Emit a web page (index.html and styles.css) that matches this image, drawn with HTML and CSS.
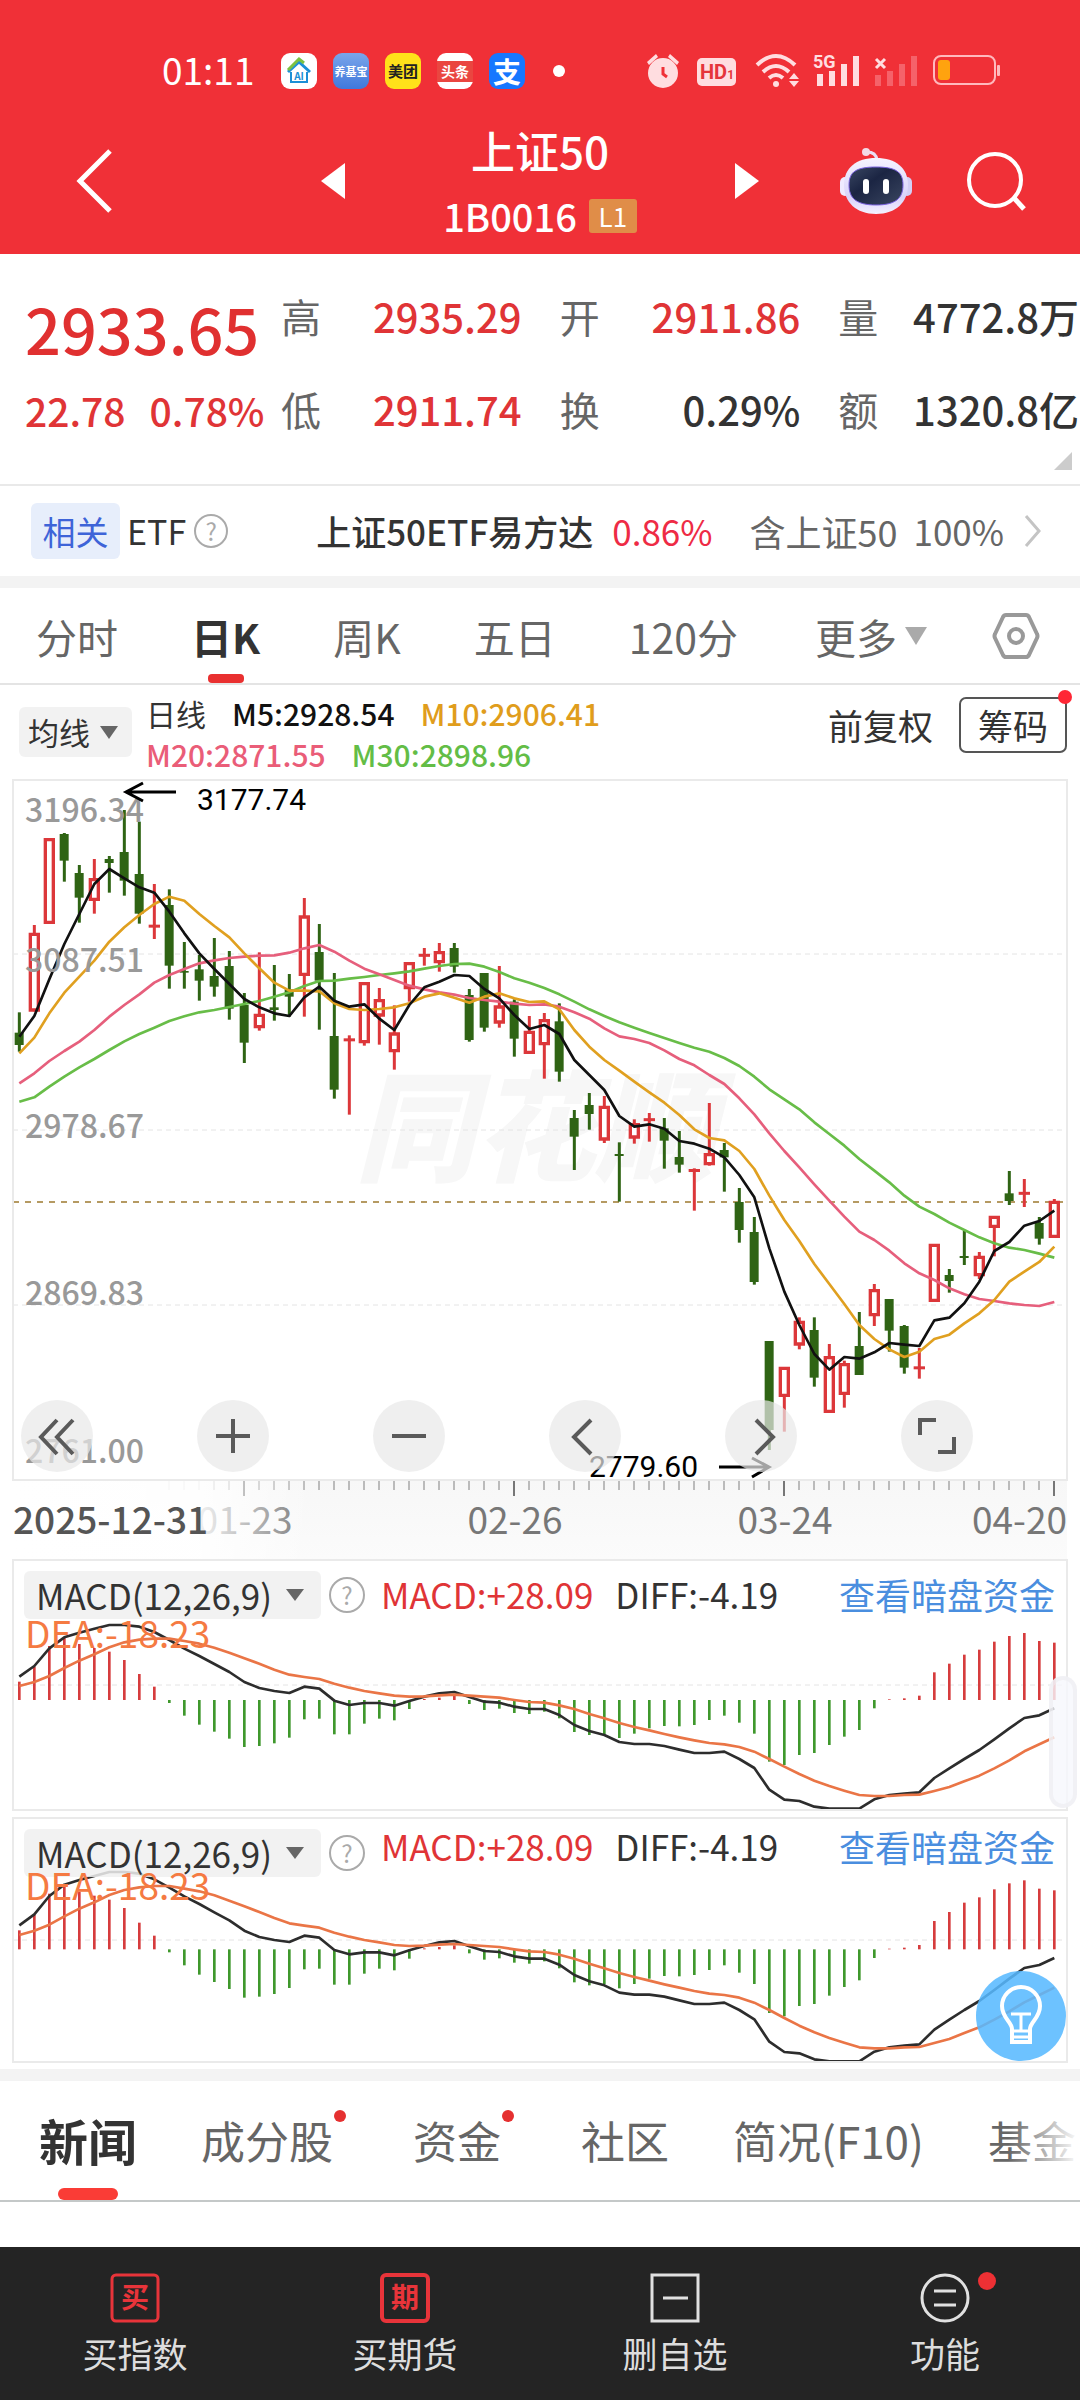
FILE: index.html
```html
<!DOCTYPE html>
<html lang="zh-CN">
<head>
<meta charset="utf-8">
<meta name="viewport" content="width=device-width, initial-scale=1">
<title>上证50 1B0016</title>
<link rel="stylesheet" href="styles.css">
</head>
<body>
<header class="top">
  <div class="status">
    <time class="clock">01:11</time>
    <div class="apps">
      <span class="app app-home"><svg viewBox="0 0 36 36" width="36" height="36"><path d="M7 19 18 9l11 10" fill="none" stroke="#1c8fd6" stroke-width="3"/><path d="M7 17 18 6l5 4" fill="none" stroke="#7cc142" stroke-width="3"/><path d="M10 19v10h16V19" fill="none" stroke="#1c8fd6" stroke-width="2"/><text x="18" y="27" class="app-ai">AI</text></svg></span>
      <span class="app app-fund">养基宝</span>
      <span class="app app-meituan">美团</span>
      <span class="app app-news"><span>头条</span></span>
      <span class="app app-pay">支</span>
    </div>
    <i class="more-dot"></i>
    <svg class="sys" viewBox="0 0 354 36" width="354" height="36" aria-hidden="true">
      <g fill="#ffdde0">
        <circle cx="17" cy="20" r="15"/>
        <path d="M1 9 10 1l2 3-9 8zM33 9 24 1l-2 3 9 8z"/>
        <rect x="51" y="5" width="39" height="28" rx="5"/>
        <circle cx="130" cy="31" r="3"/>
        <path d="M143 26l5-6 5 6zM143 28l5 6 5-6z"/>
        <rect x="171" y="21" width="6" height="12"/><rect x="183" y="18" width="6" height="15"/><rect x="195" y="11" width="6" height="22"/><rect x="207" y="3" width="6" height="30"/>
      </g>
      <path d="M17 14v7l4 3" fill="none" stroke="#f03037" stroke-width="3"/>
      <g fill="none" stroke="#ffdde0" stroke-width="4">
        <path d="M111 12q19-18 38 0M117 19q13-12 26 0M123 25q7-6 14 0"/>
        <rect x="288" y="3" width="61" height="28" rx="7" stroke="#ffb9bd" stroke-width="2"/>
        <path d="M230 6l9 9M239 6l-9 9" stroke-width="3"/>
      </g>
      <g fill="#f5626a"><rect x="229" y="22" width="6" height="11"/><rect x="241" y="18" width="6" height="15"/><rect x="253" y="11" width="6" height="22"/><rect x="265" y="3" width="6" height="30"/></g>
      <rect x="292" y="7" width="12" height="20" rx="3" fill="#ffa30f"/>
      <rect x="351" y="12" width="3" height="11" rx="1" fill="#ffb9bd"/>
      <text x="54" y="26" class="sys-hd">HD<tspan class="sys-one">1</tspan></text>
      <text x="167" y="15" class="sys-5g">5G</text>
    </svg>
  </div>
  <nav class="titlebar">
    <div class="side side-left">
      <button class="icon" aria-label="返回"><svg width="36" height="64" viewBox="0 0 36 64"><path d="M34 2 4 32l30 30" fill="none" stroke="#fff" stroke-width="5"/></svg></button>
      <button class="icon" aria-label="上一个"><svg width="24" height="36" viewBox="0 0 24 36"><path d="M24 0v36L0 18z" fill="#fff"/></svg></button>
    </div>
    <div class="heading">
      <h1>上证50</h1>
      <p>1B0016 <span class="level">L1</span></p>
    </div>
    <div class="side">
      <button class="icon" aria-label="下一个"><svg width="24" height="36" viewBox="0 0 24 36"><path d="M0 0v36l24-18z" fill="#fff"/></svg></button>
      <button class="icon push" aria-label="智能助手"><svg width="72" height="66" viewBox="0 0 72 66">
        <defs><linearGradient id="shell" x1="0" y1="0" x2="0" y2="1"><stop offset="0" stop-color="#f6f3ff"/><stop offset=".7" stop-color="#d9d3fa"/><stop offset="1" stop-color="#f4f1ff"/></linearGradient>
        <linearGradient id="visor" x1="0" y1="0" x2="1" y2="1"><stop offset="0" stop-color="#3a4763"/><stop offset=".4" stop-color="#1b2543"/><stop offset="1" stop-color="#3a4660"/></linearGradient></defs>
        <path d="M37 12q-1-8-10-8" fill="none" stroke="#eadff5" stroke-width="3"/><circle cx="26" cy="4" r="4" fill="#f3d9e6"/>
        <rect x="0" y="29" width="10" height="19" rx="5" fill="#efeaff"/><rect x="62" y="29" width="10" height="19" rx="5" fill="#d3cff5"/>
        <path d="M36 10c20 0 32 10 32 27S56 66 36 66 4 54 4 37s12-27 32-27z" fill="url(#shell)"/>
        <path d="M36 19c20 0 27 5 27 18s-7 20-27 20S9 50 9 37s7-18 27-18z" fill="url(#visor)" stroke="#7b63e0" stroke-width="1"/>
        <rect x="23" y="31" width="6" height="15" rx="3" fill="#fff"/><rect x="43" y="31" width="6" height="15" rx="3" fill="#fff"/></svg></button>
      <button class="icon search" aria-label="搜索"><svg width="60" height="60" viewBox="0 0 60 60" fill="none" stroke="#fff" stroke-width="4"><circle cx="29" cy="29" r="26"/><path d="m48 47 10 11" stroke-width="5"/></svg></button>
    </div>
  </nav>
</header>

<main>
  <section class="quote">
    <strong class="price">2933.65</strong>
    <dl class="pair"><dt>高</dt><dd class="up">2935.29</dd></dl>
    <dl class="pair"><dt>开</dt><dd class="up">2911.86</dd></dl>
    <dl class="pair"><dt>量</dt><dd>4772.8万</dd></dl>
    <p class="change"><span>22.78</span><span>0.78%</span></p>
    <dl class="pair"><dt>低</dt><dd class="up">2911.74</dd></dl>
    <dl class="pair"><dt>换</dt><dd>0.29%</dd></dl>
    <dl class="pair"><dt>额</dt><dd>1320.8亿</dd></dl>
    <svg class="corner" width="18" height="18" viewBox="0 0 18 18"><path d="M18 0v18H0z" fill="#ccc"/></svg>
  </section>

  <section class="etf">
    <span class="tag">相关</span><span class="etf-label">ETF</span>
    <button class="help" aria-label="说明">?</button>
    <a class="etf-link" href="#etf"><b>上证50ETF易方达</b><span class="pct">0.86%</span><span class="share">含上证50</span><span class="weight">100%</span>
      <svg width="18" height="32" viewBox="0 0 18 32"><path d="M2 1 15 16 2 31" fill="none" stroke="#c4c4c4" stroke-width="3"/></svg></a>
  </section>

  <nav class="periods">
    <button>分时</button><button class="on">日K</button><button>周K</button><button>五日</button><button>120分</button>
    <button class="drop">更多<svg width="22" height="18" viewBox="0 0 22 18"><path d="M0 0h22L11 18z" fill="#aaa"/></svg></button>
    <button aria-label="设置" class="gear"><svg width="48" height="46" viewBox="0 0 48 46" fill="none" stroke="#999" stroke-width="4"><path d="M14 2h20q2 0 3 2l8 17q1 2 0 4l-8 17q-1 2-3 2H14q-2 0-3-2L3 25q-1-2 0-4l8-17q1-2 3-2z"/><circle cx="24" cy="23" r="7"/></svg></button>
  </nav>

  <section class="chart">
    <div class="legend">
      <button class="chip ma">均线<svg width="18" height="13" viewBox="0 0 18 13"><path d="M0 0h18L9 13z" fill="#666"/></svg></button>
      <div class="averages">
        <p><span class="c-name">日线</span><span class="c-m5">M5:2928.54</span><span class="c-m10">M10:2906.41</span></p>
        <p><span class="c-m20">M20:2871.55</span><span class="c-m30">M30:2898.96</span></p>
      </div>
      <button class="adjust">前复权</button>
      <button class="chips">筹码<i class="dot"></i></button>
    </div>

    <div class="panel">
      <svg class="plot" viewBox="0 0 1054 700" role="img" aria-label="日K线图">
        <text class="watermark" x="342" y="392">同花顺</text>
        <g class="grid"><path d="M0 174H1054M0 350H1054M0 525H1054"/><path class="last" d="M0 422H1054"/></g>
        <g id="candles" transform="scale(.33333)"></g>
        <g class="axis-labels"><text x="12" y="42">3196.34</text><text x="12" y="192">3087.51</text><text x="12" y="358">2978.67</text><text x="12" y="525">2869.83</text><text x="12" y="683">2761.00</text></g>
        <g class="marks"><text x="184" y="30">3177.74</text><text x="576" y="697">2779.60</text>
          <path d="M163 12H113M130 3 113 12 130 21M706 687H756M739 678 756 687 739 697"/></g>
      </svg>
      <div class="tools">
        <button aria-label="最前"><svg viewBox="0 0 72 72"><path d="M36 20 20 37l16 17M52 20 36 37l16 17"/></svg></button>
        <button aria-label="放大"><svg viewBox="0 0 72 72"><path d="M36 19v34M19 36h34"/></svg></button>
        <button aria-label="缩小"><svg viewBox="0 0 72 72"><path d="M19 36h34"/></svg></button>
        <button aria-label="左移"><svg viewBox="0 0 72 72"><path d="M42 20 25 37l17 17"/></svg></button>
        <button aria-label="右移"><svg viewBox="0 0 72 72"><path d="M31 20 48 37 31 54"/></svg></button>
        <button aria-label="全屏"><svg viewBox="0 0 72 72"><path d="M19 35V20h16M53 37v15H37"/></svg></button>
      </div>
    </div>

    <svg class="dates" viewBox="0 0 1054 80" role="img" aria-label="日期轴">
      <defs><linearGradient id="fade"><stop offset="0" stop-color="#fff"/><stop offset=".62" stop-color="#fff" stop-opacity=".9"/><stop offset="1" stop-color="#fff" stop-opacity="0"/></linearGradient></defs>
      <g id="ticks"></g>
      <g class="days"><text x="232" y="54" class="mid">01-23</text><text x="502" y="54" class="mid">02-26</text><text x="772" y="54" class="mid">03-24</text><text x="1054" y="54" class="end">04-20</text></g>
      <rect width="300" height="80" fill="url(#fade)"/>
      <text x="0" y="54" class="from">2025-12-31</text>
    </svg>

    <div class="panel macd">
      <svg class="plot" viewBox="0 0 1054 250" role="img" aria-label="MACD" data-zero="420" data-scale="1"><path class="mid-line" d="M0 125H1054"/></svg>
      <div class="macd-head">
        <button class="chip">MACD(12,26,9)<svg width="18" height="12" viewBox="0 0 18 12"><path d="M0 0h18L9 12z" fill="#666"/></svg></button>
        <button class="help" aria-label="说明">?</button>
        <span class="up">MACD:+28.09</span><span>DIFF:-4.19</span><a href="#funds">查看暗盘资金</a>
        <span class="dea">DEA:-18.23</span>
      </div>
      <i class="handle"></i>
    </div>

    <div class="panel macd compact">
      <svg class="plot" viewBox="0 0 1054 244" role="img" aria-label="MACD" data-zero="394" data-scale="1.03"><path class="mid-line" d="M0 122H1054"/></svg>
      <div class="macd-head">
        <button class="chip">MACD(12,26,9)<svg width="18" height="12" viewBox="0 0 18 12"><path d="M0 0h18L9 12z" fill="#666"/></svg></button>
        <button class="help" aria-label="说明">?</button>
        <span class="up">MACD:+28.09</span><span>DIFF:-4.19</span><a href="#funds">查看暗盘资金</a>
        <span class="dea">DEA:-18.23</span>
      </div>
      <button class="bulb" aria-label="提示"><svg width="90" height="90" viewBox="0 0 90 90" fill="none" stroke="#fff" stroke-width="4"><path d="M36 58c0-7-10-11-10-23a19 19 0 0 1 38 0c0 12-10 16-10 23v13H36z"/><path d="M35 43h20M45 43v16M36 60h18M36 66h18" stroke-width="3"/></svg></button>
    </div>
  </section>

  <nav class="topics">
    <a href="#news" class="on">新闻</a><a href="#parts" class="new">成分股</a><a href="#money" class="new">资金</a><a href="#club">社区</a><a href="#f10">简况(F10)</a><a href="#fund">基金</a>
  </nav>
</main>

<footer class="bottom">
  <button><svg width="50" height="50" viewBox="0 0 50 50"><rect x="2" y="2" width="46" height="46" rx="4" fill="none" stroke="#e8343a" stroke-width="3"/><text x="25" y="35" class="glyph">买</text></svg>买指数</button>
  <button><svg width="50" height="50" viewBox="0 0 50 50"><rect x="2" y="2" width="46" height="46" rx="4" fill="none" stroke="#e8343a" stroke-width="4"/><text x="25" y="35" class="glyph">期</text></svg>买期货</button>
  <button><svg width="50" height="50" viewBox="0 0 50 50" fill="none" stroke="#e0e0e0" stroke-width="3"><path d="M2 2h46v46H2zM13 25h25"/></svg>删自选</button>
  <button><svg width="50" height="50" viewBox="0 0 50 50" fill="none" stroke="#e0e0e0" stroke-width="3"><circle cx="25" cy="25" r="23"/><path d="M14 18h22M14 32h22"/></svg>功能<i class="dot"></i></button>
</footer>
<script src="chart.js"></script>
</body>
</html>
```
FILE: styles.css
```css
* { box-sizing: border-box; margin: 0; padding: 0; }
body { font-family: "Noto Sans CJK SC", "Noto Sans", sans-serif; color: #333; background: #fff; overflow-x: hidden; }
button { border: 0; background: none; font: inherit; color: inherit; cursor: pointer; }
a { color: inherit; text-decoration: none; }
svg { display: block; flex: none; }
.up { color: #e03436; }

/* header */
.top { background: #f03037; color: #fff; }
.status { display: flex; align-items: center; padding: 53px 80px 0 162px; height: 89px; }
.clock { font-size: 37px; line-height: 32px; padding-bottom: 4px; width: 119px; }
.apps { display: flex; gap: 16px; }
.app { width: 36px; height: 36px; border-radius: 9px; display: flex; align-items: center; justify-content: center; font-weight: 700; line-height: 36px; white-space: nowrap; }
.app-home { background: #fff; }
.app-ai { font-size: 10px; text-anchor: middle; fill: #1c8fd6; }
.app-fund { background: linear-gradient(#7aa5ea, #3f78dc); font-size: 11px; }
.app-meituan { background: #ffe11a; color: #222; font-size: 15px; }
.app-news { background: #fff; }
.app-news span { flex: 1; background: #ea4640; line-height: 21px; font-size: 14px; text-align: center; }
.app-pay { background: #1677ff; font-size: 28px; }
.more-dot { width: 12px; height: 12px; border-radius: 50%; background: #fff; margin-left: 28px; }
.sys { margin-left: auto; overflow: visible; }
.sys-hd { font: 700 20px/1 Roboto, sans-serif; fill: #e5343b; }
.sys-one { font-size: 12px; }
.sys-5g { font: 700 18px/1 Roboto, sans-serif; fill: #ffdde0; }
.titlebar { display: grid; grid-template-columns: 1fr 390px 1fr; align-items: center; padding: 19px 0 0; height: 165px; }
.side { display: flex; align-items: center; padding-right: 54px; }
.side-left { justify-content: space-between; padding: 0 0 0 76px; }
.push { margin-left: auto; }
.search { margin-left: 54px; }
.heading { text-align: center; line-height: 66px; padding-top: 3px; }
.heading h1 { font-size: 44px; font-weight: 500; }
.heading p { font-size: 38px; font-weight: 500; display: flex; justify-content: center; align-items: center; gap: 12px; }
.level { background: #e08d48; width: 48px; line-height: 34px; font-size: 26px; font-weight: 400; border-radius: 3px; }

/* quote */
.quote { position: relative; display: grid; grid-template-columns: 218px 1fr 1fr 1fr; grid-auto-rows: 93px; column-gap: 38px; align-items: center; padding: 15px 1px 29px 25px; border-bottom: 2px solid #e9e9e9; white-space: nowrap; font-size: 40px; line-height: 60px; }
.price { font-size: 63px; font-weight: 500; line-height: 60px; color: #e03030; padding-top: 24px; }
.change { display: flex; gap: 24px; font-size: 39px; color: #e03436; font-weight: 500; padding-top: 3px; }
.pair { display: flex; justify-content: space-between; }
.pair dt { color: #666; }
.pair dd { font-weight: 500; }
.corner { position: absolute; right: 8px; bottom: 14px; }

/* related fund */
.etf { display: flex; align-items: center; height: 102px; padding: 0 38px 0 31px; border-bottom: 12px solid #f3f3f3; font-size: 35px; line-height: 54px; white-space: nowrap; }
.tag { width: 89px; line-height: 56px; background: #e7eefb; color: #3e64d8; border-radius: 6px; font-size: 33px; text-align: center; }
.etf-label { margin: 0 8px 0 7px; font-size: 34px; }
.help { width: 34px; height: 34px; border: 2px solid #aaa; border-radius: 50%; color: #aaa; font-size: 24px; line-height: 28px; text-align: center; }
.etf-link { display: flex; align-items: center; margin-left: auto; }
.etf-link b { font-weight: 500; }
.pct { color: #ee2b45; margin: 0 37px 0 19px; }
.share, .weight { color: #666; }
.share { font-size: 36px; }
.weight { margin: 0 20px 0 16px; }

/* period tabs */
.periods { display: flex; gap: 73px; padding: 0 36px; height: 97px; border-bottom: 2px solid #e4e4e4; font-size: 41px; color: #666; white-space: nowrap; }
.periods button { display: flex; align-items: center; position: relative; }
.periods .on { color: #333; font-weight: 700; }
.periods .on::after { content: ""; position: absolute; bottom: 0; left: calc(50% - 18px); width: 36px; height: 9px; border-radius: 4px; background: #e93030; }
.periods .drop { gap: 8px; margin-left: 4px; }
.periods .gear { margin-left: auto; }
.periods .drop + .gear { margin-left: -8px; }

/* chart */
.chart { padding: 0 13px 7px; border-bottom: 12px solid #f3f3f3; }
.legend { display: flex; align-items: flex-start; height: 95px; padding: 8px 0 0 6px; white-space: nowrap; }
.chip { display: flex; align-items: center; background: #f0f0f0d9; border-radius: 6px; color: #333; }
.ma { width: 113px; height: 50px; margin-top: 14px; padding-left: 9px; gap: 10px; font-size: 31px; line-height: 46px; }
.averages { flex: 1; padding-left: 14px; font-size: 30px; line-height: 41px; font-weight: 500; }
.averages p { display: flex; gap: 26px; }
.c-name { font-weight: 400; }
.c-m5 { color: #111; }
.c-m10 { color: #e09d1c; }
.c-m20 { color: #ea5d78; }
.c-m30 { color: #63bd46; }
.adjust { font-size: 35px; line-height: 52px; margin: 6px 26px 0 0; }
.chips { position: relative; width: 108px; height: 56px; margin-top: 4px; border: 2px solid #555; border-radius: 7px; font-size: 35px; line-height: 50px; }
.dot { position: absolute; top: -9px; right: -7px; width: 14px; height: 14px; border-radius: 50%; background: #ff2735; }
.panel { position: relative; display: grid; outline: 2px solid #eaeaea; outline-offset: -1px; }
.panel > * { grid-area: 1 / 1; }
.plot, .dates { width: 100%; height: auto; overflow: visible; }
.watermark { font-size: 120px; font-weight: 900; font-style: italic; fill: #f7f7f7; }
.grid path, .mid-line { fill: none; stroke: #e4e4e4; stroke-width: 1; stroke-dasharray: 5 4; }
.grid .last { stroke: #b59a62; stroke-width: 2; stroke-dasharray: 6 6; }
.axis-labels { font-size: 32px; font-weight: 500; fill: #999; }
.marks { font: 30px Roboto, sans-serif; fill: #000; }
.marks path { fill: none; stroke: #000; stroke-width: 3; }
.wick { stroke-width: 9; fill: none; }
.rise { stroke: #dc373a; }
.body.rise { fill: #fff; stroke-width: 10; }
.fall { stroke: #2f6414; }
.body.fall { fill: #2f6414; stroke: none; }
.line { fill: none; stroke-width: 8; stroke-linejoin: round; }
.m5 { stroke: #111; }
.m10 { stroke: #e0a020; }
.m20 { stroke: #e65f7c; }
.m30 { stroke: #68bd48; }
.tools { align-self: end; display: flex; justify-content: space-between; padding: 0 94px 8px 8px; }
.tools button { width: 72px; height: 72px; border-radius: 50%; background: #e8e8e8b3; }
.tools svg { width: 72px; height: 72px; fill: none; stroke: #5a5a5a; stroke-width: 4; }
.dates { background: linear-gradient(#f7f7f7, #fbfbfb); }
.tick { stroke: #bbb; stroke-width: 2; }
.tick.major { stroke: #777; }
.days { font-size: 37px; fill: #777; }
.mid { text-anchor: middle; }
.end { text-anchor: end; }
.from { font-size: 37px; font-weight: 500; fill: #555; }

/* indicator panels */
.macd-head { position: relative; display: flex; align-items: flex-start; padding: 11px 12px 0 11px; font-size: 35px; line-height: 46px; white-space: nowrap; height: 60px; }
.macd-head .chip { width: 297px; height: 48px; padding-left: 12px; gap: 14px; }
.macd-head .help { margin: 6px 16px 0 8px; height: 36px; width: 36px; line-height: 30px; }
.macd-head span { margin-right: 22px; }
.macd-head a { margin-left: auto; font-size: 36px; color: #4a8edf; }
.macd-head .dea { position: absolute; left: 12px; top: 49px; font-size: 37px; color: #f57a42; }
.compact .macd-head > span, .compact .macd-head > a { line-height: 34px; }
.compact .macd-head .dea { top: 49px; }
.bar-up { stroke: #d63c3d; stroke-width: 8; }
.bar-down { stroke: #3f982c; stroke-width: 8; }
.diff { stroke: #2d2d2d; }
.dea-line { stroke: #ea7546; }
.handle { position: absolute; right: -10px; top: 116px; width: 28px; height: 132px; border: 4px solid #ececf099; border-radius: 14px; background: #f6f8fdcc; }
.compact { margin-top: 8px; }
.bulb { position: absolute; right: 1px; bottom: 1px; border-radius: 50%; background: #57b9ffdd; }

/* topic tabs */
.topics { display: flex; gap: 64px; height: 121px; padding-left: 39px; border-bottom: 2px solid #c4c8c8; font-size: 44px; line-height: 118px; color: #666; white-space: nowrap; overflow: hidden; position: relative; }
.topics::after { content: ""; position: absolute; right: 0; top: 0; bottom: 0; width: 72px; background: linear-gradient(90deg, #fff0, #fff); }
.topics a { position: relative; }
.topics .on { font-size: 49px; font-weight: 700; color: #333; }
.topics .on::after { content: ""; position: absolute; bottom: 0; left: calc(50% - 30px); width: 60px; height: 12px; border-radius: 6px; background: #fa3c36; }
.topics .new { padding-right: 16px; }
.topics .new::after { content: ""; position: absolute; top: 29px; right: 3px; width: 12px; height: 12px; border-radius: 50%; background: #e53030; }

/* action bar */
.bottom { display: grid; grid-template-columns: repeat(4, 1fr); margin-top: 45px; min-height: 153px; background: #242424; color: #ddd; }
.bottom button { position: relative; display: flex; flex-direction: column; align-items: center; gap: 5px; padding: 26px 0 20px; font-size: 35px; line-height: 50px; }
.glyph { font-size: 28px; font-weight: 700; text-anchor: middle; fill: #e8343a; }
.bottom .dot { width: 18px; height: 18px; top: 25px; right: 84px; background: #ee3034; }
```
FILE: chart.js
```js
// Values are vertical positions in thirds of a chart unit, one entry per session.
const STEP = 45, START = 19;
const x = i => START + STEP * i;
const shift = (d, list) => list.map(v => Array.isArray(v) ? [v[0], ...v.slice(1).map(n => n + d)] : v + d);

// [rise or fall, high, body top, body bottom, low]
const candles = [
  ...shift(-30, [['f',727,788,825,845],['r',465,489,724,724],['r',205,205,461,461],['f',189,192,272,335],['f',285,309,383,458],['r',267,325,392,431],['f',258,267,279,368],['f',120,246,332,377],['f',155,312,431,461],['r',342,463,474,507],['f',358,405,587,656],['f',516,603,608,656],['f',555,598,632,692],['f',504,618,650,680],['f',543,588,716,749],['f',669,705,818,879],['r',547,732,774,782],['f',585,712,720,752],['f',612,658,680,740],['r',384,437,617,740],['f',462,546,632,779],['f',609,798,959,986],['r',796,804,815,1034]]),
  ...shift(240, [['r',367,367,549,557],['r',384,418,469,554],['r',436,518,576,629],['r',307,307,387,425],['r',264,280,292,317],['r',249,274,309,335],['f',249,264,320,338],['f',387,405,540,545],['f',339,339,503,515],['r',318,437,490,503],['f',418,425,536,590],['r',468,513,581,581],['r',459,478,555,656],['f',430,484,635,665],['f',750,774,830,930],['f',699,735,762,809],['r',708,738,841,849],['f',847,882,888,1025],['r',778,790,835,851],['r',759,774,784,845],['f',774,805,842,926],['f',813,891,914,938],['r',925,925,938,1052],['r',729,880,915,917]]),
  ...shift(900, [['f',189,210,232,335],['f',324,366,450,488],['f',411,456,606,614],['f',783,783,1050,1110],['r',861,861,950,1055],['r',712,723,796,808],['f',712,750,893,920],['r',792,829,998,998],['r',842,850,944,983],['f',696,798,885,885],['r',612,628,708,738],['f',657,657,752,815],['f',735,738,863,881],['r',804,860,867,896],['r',492,492,665,665],['f',567,585,603,638],['f',453,528,534,555],['r',516,528,588,597],['r',408,408,443,529],['f',273,340,363,375],['r',297,333,347,381],['f',411,429,476,494],['r',357,363,473,473]])
];

const averages = {
  m30: [
    ...shift(-30, [995,982,950,920,892,867,840,814,792,773,753,739,727,720,711,702,693,680,667,648,633,632,626]),
    ...shift(240, [351,345,340,334,326,318,312,311,320,336,355,368,384,403,425,448,468,487,503,519,534,549,563,575]),
    ...shift(900, [-66,-42,-10,28,58,88,127,162,197,237,272,307,347,380,402,428,450,472,490,503,510,521,533])],
  m20: [
    ...shift(-30, [940,910,873,843,815,780,740,705,673,638,615,597,580,571,564,560,557,556,548,535,525,545,572]),
    ...shift(240, [326,343,360,377,388,397,404,414,420,425,431,435,433,440,457,476,505,529,537,549,571,597,616,645]),
    ...shift(900, [12,55,103,160,213,262,313,362,410,455,480,512,550,580,600,625,643,657,663,670,675,678,666])],
  m10: [
    ...shift(-30, [850,803,730,668,620,572,515,472,435,402,380,392,432,468,502,550,595,638,662,662,664,700,717]),
    ...shift(240, [450,447,442,430,410,400,413,428,410,400,415,426,424,448,510,560,600,632,665,697,728,765,808,834]),
    ...shift(900, [181,213,267,347,420,483,552,612,672,735,777,808,831,815,777,764,730,700,660,605,575,546,500])],
  m5: [
    ...shift(-30, [800,738,628,522,432,342,297,325,352,368,425,490,550,597,642,687,712,730,738,682,650,692,710]),
    ...shift(240, [433,476,510,435,382,365,345,348,387,415,465,507,495,522,600,645,690,768,800,793,806,843,851,866]),
    ...shift(900, [232,285,352,505,635,735,822,869,831,836,817,789,794,798,721,713,670,605,513,486,437,423,392])]
};

// MACD series, measured from the zero line at 450
const bars = [395,350,288,262,282,294,305,330,372,410,459,497,524,545,566,591,588,580,563,508,506,553,553,521,506,511,477,447,443,438,462,480,476,489,492,485,505,546,555,552,564,551,535,528,529,525,510,497,518,551,635,645,615,609,585,560,540,475,448,445,437,367,341,314,299,275,258,249,273,278];
const diff = [380,348,295,262,248,236,225,225,230,246,270,296,318,342,366,396,414,423,429,410,416,452,465,459,459,467,453,440,430,426,441,455,458,470,477,477,495,525,543,555,576,582,582,588,599,609,609,605,627,654,719,749,753,770,776,776,776,748,735,731,727,684,655,627,600,568,535,504,496,475];
const dea = [408,396,378,354,332,313,292,277,269,266,266,273,281,293,308,325,341,359,374,381,387,401,413,423,430,437,440,439,436,434,437,440,443,450,456,458,466,477,492,505,519,531,541,552,562,571,579,583,591,605,627,650,672,692,708,722,735,738,738,735,734,723,711,694,677,655,631,604,583,562];

const path = (cls, d) => `<path class="${cls}" d="${d}"/>`;
const polyline = (cls, list, y = v => v) => path('line ' + cls, 'M' + list.map((v, i) => x(i) + ' ' + y(v)).join('L'));

document.getElementById('candles').innerHTML = candles.map(([kind, high, top, bottom, low], i) => {
  const c = kind === 'r' ? 'rise' : 'fall', cx = x(i);
  const wick = path('wick ' + c, `M${cx} ${high}V${low}`);
  if (c === 'fall') return wick + path('body fall', `M${cx - 14} ${top}h27V${bottom}h-27z`);
  if (bottom - top < 18) return wick + path('wick rise', `M${cx - 17} ${(top + bottom) / 2}h34`);
  return wick + path('body rise', `M${cx - 12} ${top + 4}h24V${bottom - 4}h-24z`);
}).join('') + Object.entries(averages).map(([name, list]) => polyline(name, list)).join('');

document.querySelectorAll('[data-zero]').forEach(svg => {
  const zero = +svg.dataset.zero, k = +svg.dataset.scale;
  const y = v => Math.round(zero + (v - 450) * k);
  const group = document.createElementNS('http://www.w3.org/2000/svg', 'g');
  group.setAttribute('transform', 'scale(.33333)');
  group.innerHTML = bars.map((v, i) => path(v < 450 ? 'bar-up' : 'bar-down', `M${x(i)} ${zero}V${y(v)}`)).join('')
    + polyline('diff', diff, y) + polyline('dea-line', dea, y);
  svg.append(group);
});

let ticks = '';
for (let i = 10; i < 70; i++) {
  const major = [15, 33, 51, 69].includes(i), px = Math.round(x(i) / 3);
  ticks += path(major ? 'tick major' : 'tick', `M${px} 1V${major ? 16 : 10}`);
}
document.getElementById('ticks').innerHTML = ticks;
```
